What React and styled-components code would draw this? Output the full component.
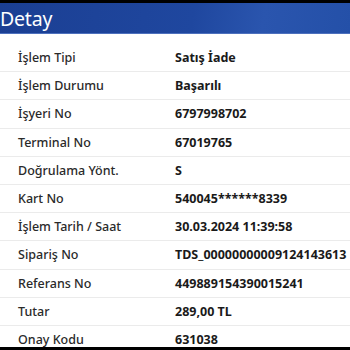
import React from 'react';
import styled, { createGlobalStyle } from 'styled-components';

const GlobalStyle = createGlobalStyle`
    html, body {
        margin: 0;
        padding: 0;
        background: #000;
    }
    body {
        font-family: "Noto Sans", "Open Sans", sans-serif;
    }
`;

const Screen = styled.div`
    width: 350px;
    height: 350px;
    display: flex;
    flex-direction: column;
    background: #000;
    overflow: hidden;
`;

const Header = styled.div`
    margin-top: 3px;
    height: 30px;
    flex-shrink: 0;
    display: flex;
    align-items: center;
    background: linear-gradient(100deg, #1b3f93 0%, #1f479f 55%, #2a55ae 75%, #2450a8 100%);
    border-bottom: 1px solid #4d70bd;
    color: #fff;
    font-size: 19.5px;
    letter-spacing: -0.2px;
`;

const Body = styled.div`
    flex: 1;
    margin-bottom: 3px;
    background: #fff;
    padding-top: 10px;
    overflow: hidden;
`;

const Row = styled.div`
    display: grid;
    grid-template-columns: 157px 1fr;
    height: 27.2px;
    align-items: center;
    padding-left: 18px;
    border-bottom: 1px solid #ebebeb;
    font-size: 12.5px;
    color: #2a2a2a;
    white-space: nowrap;
`;

const Label = styled.span`
    font-weight: 500;
`;

const Value = styled.span`
    font-weight: 700;
    color: #1a1a1a;
`;

const rows = [
    ['İşlem Tipi', 'Satış İade'],
    ['İşlem Durumu', 'Başarılı'],
    ['İşyeri No', '6797998702'],
    ['Terminal No', '67019765'],
    ['Doğrulama Yönt.', 'S'],
    ['Kart No', '540045******8339'],
    ['İşlem Tarih / Saat', '30.03.2024 11:39:58'],
    ['Sipariş No', 'TDS_00000000009124143613'],
    ['Referans No', '449889154390015241'],
    ['Tutar', '289,00 TL'],
    ['Onay Kodu', '631038'],
];

export default function App() {
    return (
        <Screen>
            <GlobalStyle />
            <Header>Detay</Header>
            <Body>
                {rows.map(([label, value]) => (
                    <Row key={label}>
                        <Label>{label}</Label>
                        <Value>{value}</Value>
                    </Row>
                ))}
            </Body>
        </Screen>
    );
}
